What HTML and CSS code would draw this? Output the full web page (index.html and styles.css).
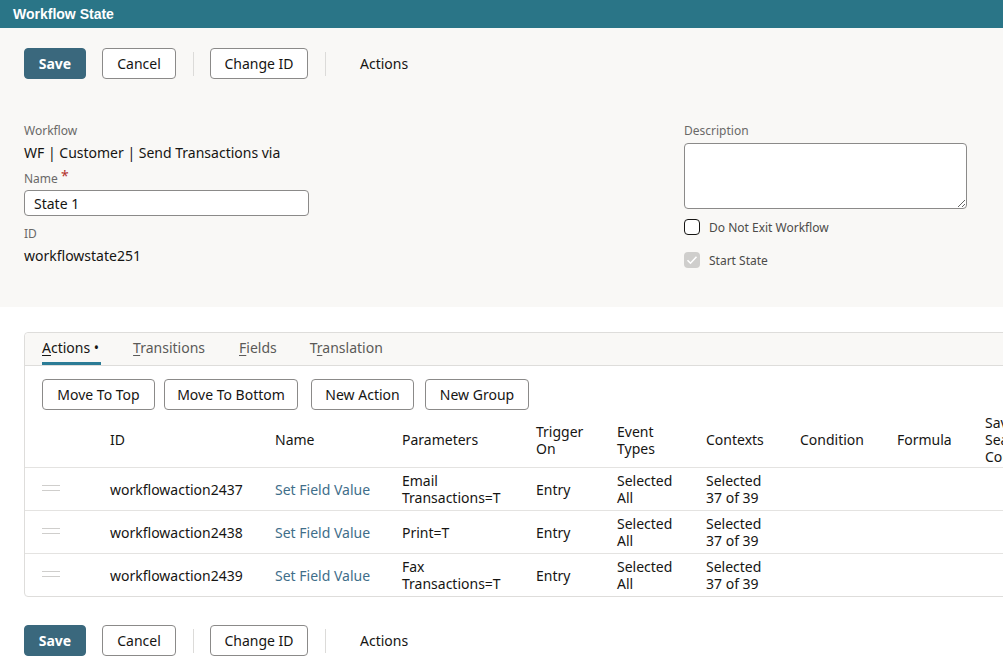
FILE: index.html
```html
<!DOCTYPE html>
<html lang="en">
<head>
<meta charset="utf-8">
<title>Workflow State</title>
<link rel="stylesheet" href="styles.css">
</head>
<body>
<header class="titlebar">Workflow State</header>

<section class="main">
  <div class="toolbar">
    <button class="btn btn-primary">Save</button>
    <button class="btn">Cancel</button>
    <span class="sep"></span>
    <button class="btn">Change ID</button>
    <span class="sep"></span>
    <button class="btn btn-text">Actions</button>
  </div>

  <div class="form">
    <div class="col">
      <div class="label">Workflow</div>
      <div class="value">WF | Customer | Send Transactions via</div>
      <div class="label label-gap">Name <span class="req">*</span></div>
      <input class="input" type="text" value="State 1">
      <div class="label label-gap2">ID</div>
      <div class="value">workflowstate251</div>
    </div>
    <div class="spacer"></div>
    <div class="col">
      <div class="label">Description</div>
      <textarea class="textarea"></textarea>
      <label class="check check-first"><span class="box"></span><span class="check-text">Do Not Exit Workflow</span></label>
      <label class="check"><span class="box box-disabled"><svg viewBox="0 0 16 16" width="16" height="16"><path d="M3.5 8.2l3 3 6-6.4" fill="none" stroke="#fff" stroke-width="1.6"/></svg></span><span class="check-text">Start State</span></label>
    </div>
  </div>
</section>

<section class="panel">
  <div class="tabs">
    <span class="tab t1 active"><u>A</u>ctions •</span>
    <span class="tab t2"><u>T</u>ransitions</span>
    <span class="tab t3"><u>F</u>ields</span>
    <span class="tab t4">T<u>r</u>anslation</span>
  </div>
  <div class="panel-body">
    <div class="btnrow">
      <button class="btn b1">Move To Top</button>
      <button class="btn b2">Move To Bottom</button>
      <button class="btn b3">New Action</button>
      <button class="btn b4">New Group</button>
    </div>
    <table class="grid">
      <colgroup>
        <col class="c-handle"><col class="c-id"><col class="c-name"><col class="c-params"><col class="c-trig"><col class="c-event"><col class="c-ctx"><col class="c-cond"><col class="c-form"><col class="c-saved">
      </colgroup>
      <thead>
        <tr>
          <th></th><th>ID</th><th>Name</th><th>Parameters</th><th>Trigger<br>On</th><th>Event<br>Types</th><th>Contexts</th><th>Condition</th><th>Formula</th><th>Saved<br>Search<br>Condition</th>
        </tr>
      </thead>
      <tbody>
        <tr>
          <td><span class="handle"></span></td><td>workflowaction2437</td><td><a class="link">Set Field Value</a></td><td>Email<br>Transactions=T</td><td>Entry</td><td>Selected<br>All</td><td>Selected<br>37 of 39</td><td></td><td></td><td></td>
        </tr>
        <tr>
          <td><span class="handle"></span></td><td>workflowaction2438</td><td><a class="link">Set Field Value</a></td><td>Print=T</td><td>Entry</td><td>Selected<br>All</td><td>Selected<br>37 of 39</td><td></td><td></td><td></td>
        </tr>
        <tr>
          <td><span class="handle"></span></td><td>workflowaction2439</td><td><a class="link">Set Field Value</a></td><td>Fax<br>Transactions=T</td><td>Entry</td><td>Selected<br>All</td><td>Selected<br>37 of 39</td><td></td><td></td><td></td>
        </tr>
      </tbody>
    </table>
  </div>
</section>

<div class="toolbar toolbar-bottom">
  <button class="btn btn-primary">Save</button>
  <button class="btn">Cancel</button>
  <span class="sep"></span>
  <button class="btn">Change ID</button>
  <span class="sep"></span>
  <button class="btn btn-text">Actions</button>
</div>
</body>
</html>
```

FILE: styles.css
```css
html, body {
  margin: 0;
  padding: 0;
  background: #ffffff;
  overflow: hidden;
}
body {
  font-family: "Noto Sans", "Open Sans", sans-serif;
  font-size: 14px;
  color: #161513;
  width: 1003px;
  height: 669px;
}
.titlebar {
  height: 28px;
  background: #2a7587;
  color: #ffffff;
  font-family: "Liberation Sans", Arial, sans-serif;
  font-weight: bold;
  font-size: 14px;
  line-height: 28px;
  padding-left: 13px;
}
.main {
  background: #f9f8f6;
  height: 279px;
  padding: 20px 36px 0 24px;
  box-sizing: border-box;
}
.toolbar {
  display: flex;
  align-items: center;
  gap: 16px;
  height: 31px;
}
.toolbar-bottom {
  margin: 28px 0 0 24px;
}
.btn {
  font-family: inherit;
  font-size: 14px;
  color: #161513;
  background: #ffffff;
  border: 1px solid #8b8a89;
  border-radius: 4px;
  height: 31px;
  padding: 0;
  line-height: 29px;
  cursor: pointer;
  box-sizing: border-box;
  text-align: center;
}
.btn-primary {
  background: #3a687d;
  border-color: #3a687d;
  color: #ffffff;
  font-weight: bold;
  width: 62px;
}
.toolbar .btn:nth-child(2) { width: 74px; }
.toolbar .btn:nth-child(4) { width: 98px; }
.btn-text {
  border-color: transparent;
  background: transparent;
  padding: 0 17px;
}
.sep {
  width: 1px;
  height: 24px;
  background: #dcdbd9;
  margin-left: 1px;
}
.form {
  display: grid;
  grid-template-columns: 285px 1fr 283px;
  margin-top: 44px;
}
.col {
  display: flex;
  flex-direction: column;
}
.label {
  font-size: 12px;
  line-height: 16px;
  color: #6a6968;
}
.label-gap { margin-top: 7px; }
.label-gap2 { margin-top: 10px; }
.req {
  color: #b3312b;
  font-size: 14px;
  position: relative;
  top: -2px;
}
.value {
  margin-top: 4px;
  line-height: 20px;
}
.input {
  margin-top: 3px;
  height: 26px;
  box-sizing: border-box;
  border: 1px solid #8b8a89;
  border-radius: 4px;
  background: #ffffff;
  padding: 0 9px;
  font-family: inherit;
  font-size: 14px;
  color: #161513;
}
.textarea {
  margin-top: 4px;
  height: 66px;
  box-sizing: border-box;
  border: 1px solid #8b8a89;
  border-radius: 4px;
  background: #ffffff;
  resize: both;
  font-family: inherit;
}
.check {
  display: flex;
  align-items: center;
  gap: 9px;
  height: 16px;
  margin-top: 17px;
}
.check-first { margin-top: 10px; }
.box {
  width: 16px;
  height: 16px;
  box-sizing: border-box;
  border: 1px solid #161513;
  border-radius: 4px;
  background: #ffffff;
  display: block;
}
.box-disabled {
  border: none;
  background: #cfcecc;
}
.box svg { display: block; }
.check-text {
  font-size: 12px;
  color: #4c4b49;
}
.panel {
  margin: 25px 0 0 24px;
  width: 1100px;
  border: 1px solid #dedddb;
  border-radius: 4px;
  box-sizing: border-box;
}
.tabs {
  display: flex;
  height: 32px;
  padding-left: 17px;
  background: #f9f8f6;
  border-bottom: 1px solid #dedddb;
  border-radius: 4px 0 0 0;
}
.tab {
  line-height: 30px;
  color: #5b5a58;
  position: relative;
  height: 32px;
}
.t2 { margin-left: 34px; }
.t3 { margin-left: 34px; }
.t4 { margin-left: 33px; }
.tab u { text-decoration-thickness: 1px; text-underline-offset: 2px; }
.tab.active { color: #161513; }
.tab.active::after {
  content: "";
  position: absolute;
  left: 0;
  right: -2px;
  bottom: 0;
  height: 3px;
  background: #2b7c96;
}
.panel-body {
  padding-top: 13px;
}
.btnrow {
  display: flex;
  padding-left: 17px;
}
.b1 { width: 113px; }
.b2 { width: 134px; margin-left: 9px; }
.b3 { width: 103px; margin-left: 13px; }
.b4 { width: 104px; margin-left: 11px; }
.grid {
  border-collapse: collapse;
  table-layout: fixed;
  width: 1060px;
  margin-top: 3px;
}
.c-handle { width: 68px; }
.c-id { width: 165px; }
.c-name { width: 127px; }
.c-params { width: 134px; }
.c-trig { width: 81px; }
.c-event { width: 89px; }
.c-ctx { width: 94px; }
.c-cond { width: 97px; }
.c-form { width: 88px; }
.c-saved { width: 117px; }
.grid th {
  font-weight: normal;
  text-align: left;
  padding: 1px 0 2px 17px;
  line-height: 17px;
  height: 51px;
  vertical-align: middle;
  border-bottom: 1px solid #e4e3e1;
}
.grid td {
  padding: 4px 0 4px 17px;
  line-height: 17px;
  height: 34px;
  vertical-align: middle;
  border-bottom: 1px solid #e4e3e1;
}
.grid tbody tr:last-child td { border-bottom: none; }
.handle {
  display: block;
  width: 18px;
  height: 4px;
  border-top: 1px solid #cfcecc;
  border-bottom: 1px solid #cfcecc;
  margin-top: -2px;
}
.link {
  color: #3f6e8a;
  text-decoration: none;
}
```
